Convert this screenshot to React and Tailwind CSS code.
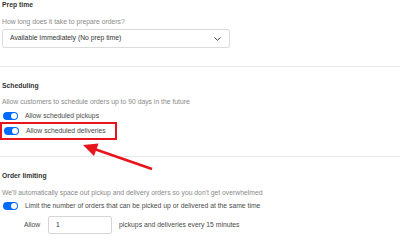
import React from 'react';

function Toggle() {
  return (
    <span className="ml-[1px] flex h-[8px] w-[15px] shrink-0 items-center justify-end rounded-full bg-[#006aff] pr-[1px]">
      <span className="h-[6px] w-[6px] rounded-full bg-white" />
    </span>
  );
}

function Row({ className = '', children }) {
  return <div className={`flex h-[10px] items-center whitespace-nowrap ${className}`}>{children}</div>;
}

export default function App() {
  return (
    <div className="relative h-[246px] w-[400px] overflow-hidden bg-white px-[2px] font-['Liberation_Sans',Arial,sans-serif] text-[6.8px] leading-none text-[#4a4a4a]">
      {/* Prep time */}
      <Row className="font-bold text-[#333]">Prep time</Row>
      <Row className="mt-[7px] text-[#8a8a8a]">How long does it take to prepare orders?</Row>
      <div className="mt-[2px] flex h-[19px] w-[228px] items-center justify-between rounded-[2px] border border-[#dcdcdc] pl-[7px] pr-[8px] text-[#333]">
        <span>Available Immediately (No prep time)</span>
        <svg width="7" height="4" viewBox="0 0 7 4" fill="none">
          <path d="M0.5 0.5 L3.5 3.3 L6.5 0.5" stroke="#444" strokeWidth="1" />
        </svg>
      </div>
      <div className="-mx-[2px] mt-[18px] h-px bg-[#e8e8e8]" />

      {/* Scheduling */}
      <Row className="mt-[14px] font-bold text-[#333]">Scheduling</Row>
      <Row className="mt-[6px] text-[#8a8a8a]">Allow customers to schedule orders up to 90 days in the future</Row>
      <Row className="mt-[4px] gap-[7px]">
        <Toggle />
        <span>Allow scheduled pickups</span>
      </Row>
      <div className="-ml-[2px] mt-[1px] flex h-[18px] w-[117px] items-center gap-[7px] whitespace-nowrap border-2 border-[#e8141b] pl-[1px]">
        <Toggle />
        <span>Allow scheduled deliveries</span>
      </div>
      <div className="-mx-[2px] mt-[16px] h-px bg-[#e8e8e8]" />

      {/* Order limiting */}
      <Row className="mt-[14px] font-bold text-[#333]">Order limiting</Row>
      <Row className="mt-[7px] text-[#8a8a8a]">We'll automatically space out pickup and delivery orders so you don't get overwhelmed</Row>
      <Row className="mt-[3px] gap-[7px]">
        <Toggle />
        <span>Limit the number of orders that can be picked up or delivered at the same time</span>
      </Row>
      <div className="mt-[5px] flex h-[18px] items-center whitespace-nowrap">
        <span className="ml-[22px] w-[24px]">Allow</span>
        <div className="flex h-[18px] w-[64px] items-center rounded-[2px] border border-[#d6d6d6] pl-[7px] text-[#333]">1</div>
        <span className="ml-[7px]">pickups and deliveries every 15 minutes</span>
      </div>

      {/* annotation arrow */}
      <svg className="pointer-events-none absolute left-0 top-0" width="400" height="246" viewBox="0 0 400 246">
        <line x1="152" y1="169" x2="93" y2="148.5" stroke="#e8141b" strokeWidth="2.5" />
        <polygon points="83,145 98.5,143.5 94,156" fill="#e8141b" />
      </svg>
    </div>
  );
}
